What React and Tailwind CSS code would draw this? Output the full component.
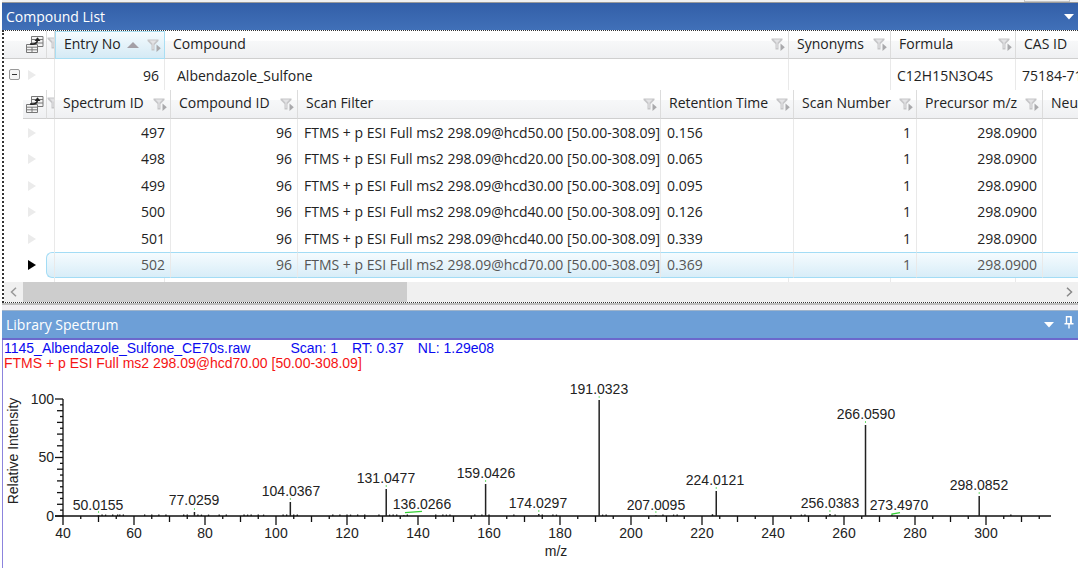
import { useState } from 'react';

const spectra = [
  { id: 497, compound: 96, filter: 'FTMS + p ESI Full ms2 298.09@hcd50.00 [50.00-308.09]', rt: '0.156', scan: 1, mz: '298.0900' },
  { id: 498, compound: 96, filter: 'FTMS + p ESI Full ms2 298.09@hcd20.00 [50.00-308.09]', rt: '0.065', scan: 1, mz: '298.0900' },
  { id: 499, compound: 96, filter: 'FTMS + p ESI Full ms2 298.09@hcd30.00 [50.00-308.09]', rt: '0.095', scan: 1, mz: '298.0900' },
  { id: 500, compound: 96, filter: 'FTMS + p ESI Full ms2 298.09@hcd40.00 [50.00-308.09]', rt: '0.126', scan: 1, mz: '298.0900' },
  { id: 501, compound: 96, filter: 'FTMS + p ESI Full ms2 298.09@hcd40.00 [50.00-308.09]', rt: '0.339', scan: 1, mz: '298.0900' },
  { id: 502, compound: 96, filter: 'FTMS + p ESI Full ms2 298.09@hcd70.00 [50.00-308.09]', rt: '0.369', scan: 1, mz: '298.0900' },
];

// h = line height in px, lx / ly = label centre and baseline
const peaks = [
  { mz: 50.0155, h: 1, lx: 95, ly: 138 },
  { mz: 77.0259, h: 4, lx: 191, ly: 133 },
  { mz: 104.0367, h: 14, lx: 288, ly: 124 },
  { mz: 131.0477, h: 27, lx: 383, ly: 111 },
  { mz: 136.0266, h: 1, lx: 419, ly: 137, link: 'M402 140.6L419 139.4' },
  { mz: 159.0426, h: 32, lx: 483, ly: 106 },
  { mz: 174.0297, h: 2, lx: 535, ly: 136 },
  { mz: 191.0323, h: 116, lx: 596, ly: 22 },
  { mz: 207.0095, h: 1, lx: 653, ly: 138 },
  { mz: 224.0121, h: 25, lx: 712, ly: 113 },
  { mz: 256.0383, h: 2, lx: 827, ly: 136 },
  { mz: 266.059, h: 91, lx: 863, ly: 47 },
  { mz: 273.497, h: 1, lx: 896, ly: 138, link: 'M889 143V142L897 140.6' },
  { mz: 298.0852, h: 20, lx: 976, ly: 118 },
];

const noise = [51, 52, 54, 55.4, 56, 57, 63, 65, 67, 69, 74, 75, 78, 79, 81, 84, 86, 91, 92, 93, 95, 96.5, 102, 103, 105, 106, 116, 118, 120, 121, 123, 125, 129, 132, 133, 134, 137, 145, 147, 148, 149, 156, 158, 160, 167, 175, 178, 179, 192, 193, 209, 212, 213, 222.9, 223, 248, 249, 257.5, 307];

const X0 = 60;
const Y0 = 144;
const px = (mz) => X0 + (mz - 40) * 3.55;

function FilterIcon() {
  return (
    <button aria-label="Filter" className="shrink-0">
      <svg width="14" height="13" viewBox="0 0 14 13" className="block">
        <path d="M0.5 0.5H11.5V2L7.5 6V11.5H4.5V6L0.5 2Z" fill="#c6c6c8" />
        <path d="M2.5 1.5H9.5L6.5 4.8V10H5.5V4.8Z" fill="#e3e3e5" />
        <path d="M9.5 5.5L13.8 9.2L9.5 13Z" fill="#a9a9ac" />
      </svg>
    </button>
  );
}

function FieldChooserIcon() {
  return (
    <button aria-label="Field chooser" className="block">
      <svg width="18" height="17" viewBox="0 0 18 17" className="block">
        <path d="M5.5 0.5H17V10.5H5.5Z" fill="#f4f4f4" stroke="#777" />
        <path d="M5.5 3.5H17M5.5 7H17" stroke="#777" />
        <path d="M0.5 8.5H11.5V16.5H0.5Z" fill="#f4f4f4" stroke="#777" />
        <path d="M0.5 11.2H11.5M0.5 13.8H11.5M6 11V16.5" stroke="#777" />
        <path d="M4 8C8 8.5 11.4 7.5 11.5 4" fill="none" stroke="#222" strokeWidth="1.6" />
        <path d="M8.5 5L11.5 1.2L14.5 5Z" fill="#222" />
      </svg>
    </button>
  );
}

function HeadCell({ label, sorted, last }) {
  return (
    <th
      scope="col"
      className={`overflow-hidden border-b p-0 text-left font-normal ${
        sorted
          ? 'border border-[#a9def3] bg-linear-to-b from-[#f4fbfe] to-[#d5eaf5]'
          : 'border-[#cfcfcf] bg-linear-to-b from-white from-35% via-[#f7f8f9] via-36% to-[#eff0f2]'
      } ${!sorted && !last ? 'border-r border-r-[#dcdcdc]' : ''}`}
    >
      <div className="flex items-center justify-between pr-[3px] pl-2 whitespace-nowrap">
        <span className="mb-[2px] leading-6">{label}</span>
        {sorted && (
          <svg width="12" height="6" viewBox="0 0 12 6" className="mr-2 ml-auto">
            <path d="M0 6L6 0L12 6Z" fill="#a39fa6" />
          </svg>
        )}
        {!last && <FilterIcon />}
      </div>
    </th>
  );
}

function SliverHead() {
  return (
    <th className="overflow-hidden border-x border-b border-[#cfcfcf] border-x-[#dcdcdc] bg-linear-to-b from-white from-35% via-[#f7f8f9] via-36% to-[#eff0f2] p-0">
      <FilterIcon />
    </th>
  );
}

function RowArrow({ active }) {
  return (
    <svg width="8" height="10" viewBox="0 0 8 10" className="ml-[5px] block">
      <path d="M0 0L8 5L0 10Z" fill={active ? '#000' : '#ebebeb'} />
    </svg>
  );
}

function SpectraTable() {
  const [selected, setSelected] = useState(502);
  const head = 'border-b border-[#cfcfcf] bg-linear-to-b from-white from-35% via-[#f7f8f9] via-36% to-[#eff0f2]';
  return (
    <table className="w-full table-fixed border-separate border-spacing-0">
      <colgroup>
        <col className="w-[23px]" />
        <col className="w-[9px]" />
        <col className="w-[116px]" />
        <col className="w-[127px]" />
        <col />
        <col className="w-[133px]" />
        <col className="w-[123px]" />
        <col className="w-[126px]" />
        <col className="w-[35px]" />
      </colgroup>
      <thead>
        <tr className="h-[29px]">
          <th className={`p-0 pl-[3px] ${head}`}><FieldChooserIcon /></th>
          <SliverHead />
          <HeadCell label="Spectrum ID" />
          <HeadCell label="Compound ID" />
          <HeadCell label="Scan Filter" />
          <HeadCell label="Retention Time" />
          <HeadCell label="Scan Number" />
          <HeadCell label="Precursor m/z" />
          <HeadCell label="Neu" last />
        </tr>
      </thead>
      <tbody>
        {spectra.map((s) => {
          const on = s.id === selected;
          const cell = `overflow-hidden whitespace-nowrap border-r border-r-[#e9e9e9] py-0 leading-5 ${
            on ? 'border-y border-y-[#a3dcf5] bg-linear-to-b from-[#f5fbfe] to-[#d8edf8] text-[#555]' : ''
          }`;
          return (
            <tr key={s.id} onClick={() => setSelected(s.id)} className="h-[26px] odd:h-[27px]">
              <td className="p-0"><RowArrow active={on} /></td>
              <td className={`p-0 border-r border-r-[#e9e9e9] ${on ? 'rounded-l-md border-y border-l border-[#a3dcf5] bg-linear-to-b from-[#f5fbfe] to-[#d8edf8]' : ''}`}></td>
              <td className={`pr-[5px] pl-0 text-right ${cell}`}>{s.id}</td>
              <td className={`pr-[5px] pl-0 text-right ${cell}`}>{s.compound}</td>
              <td className={`pr-0 pl-[6px] ${cell}`}>{s.filter}</td>
              <td className={`pr-0 pl-[6px] ${cell}`}>{s.rt}</td>
              <td className={`pr-[5px] pl-0 text-right ${cell}`}>{s.scan}</td>
              <td className={`pr-[5px] pl-0 text-right ${cell}`}>{s.mz}</td>
              <td className={on ? 'border-y border-y-[#a3dcf5] bg-linear-to-b from-[#f5fbfe] to-[#d8edf8] p-0' : 'p-0'}></td>
            </tr>
          );
        })}
      </tbody>
    </table>
  );
}

function CompoundTable() {
  const [open, setOpen] = useState(true);
  const line = 'border-r border-[#e9e9e9] p-0';
  return (
    <table className="w-full table-fixed border-separate border-spacing-0">
      <colgroup>
        <col className="w-[42px]" />
        <col className="w-[9px]" />
        <col className="w-[110px]" />
        <col />
        <col className="w-[102px]" />
        <col className="w-[125px]" />
        <col className="w-[62px]" />
      </colgroup>
      <thead>
        <tr className="h-[28px]">
          <th className="border-b border-[#cfcfcf] bg-linear-to-b from-white from-35% via-[#f7f8f9] via-36% to-[#eff0f2] p-0 pl-[22px]">
            <FieldChooserIcon />
          </th>
          <SliverHead />
          <HeadCell label="Entry No" sorted />
          <HeadCell label="Compound" />
          <HeadCell label="Synonyms" />
          <HeadCell label="Formula" />
          <HeadCell label="CAS ID" last />
        </tr>
      </thead>
      <tbody>
        <tr className="h-[31px]">
          <td className="p-0">
            <div className="flex items-center pl-[5px]">
              <button
                aria-label={open ? 'Collapse' : 'Expand'}
                onClick={() => setOpen(!open)}
                className="flex h-[11px] w-[11px] items-center justify-center rounded-xs border border-[#999] bg-[#f5f5f5]"
              >
                <span className="h-px w-[5px] bg-[#333]"></span>
              </button>
              <div className="ml-[3px]"><RowArrow /></div>
            </div>
          </td>
          <td className={line}></td>
          <td className={`${line} pt-[2px] pr-[5px] text-right`}>96</td>
          <td className={`${line} pt-[2px] pl-3`}>Albendazole_Sulfone</td>
          <td className={line}></td>
          <td className={`${line} pt-[2px] pl-[6px]`}>C12H15N3O4S</td>
          <td className="overflow-hidden p-0 pt-[2px] pl-[6px] whitespace-nowrap">75184-71</td>
        </tr>
        {open && (
          <tr>
            <td colSpan={7} className="p-0 pl-[19px]"><SpectraTable /></td>
          </tr>
        )}
        <tr className="h-1">
          <td className="p-0"></td>
          <td className={line}></td>
          <td className={line}></td>
          <td className={line}></td>
          <td className={line}></td>
          <td className={line}></td>
          <td className="p-0"></td>
        </tr>
      </tbody>
    </table>
  );
}

function ScrollBar() {
  return (
    <div className="flex h-5 items-stretch bg-[#f0f0f0]">
      <button aria-label="Scroll left" className="flex w-[19px] items-center justify-center">
        <svg width="7" height="10" viewBox="0 0 7 10"><path d="M6 0.8L1.5 5L6 9.2" fill="none" stroke="#999" strokeWidth="1.5" /></svg>
      </button>
      <div className="flex-1"><div className="h-full w-[37%] bg-[#cdcdcd]"></div></div>
      <button aria-label="Scroll right" className="flex w-[18px] items-center justify-center">
        <svg width="7" height="10" viewBox="0 0 7 10"><path d="M1 0.8L5.5 5L1 9.2" fill="none" stroke="#888" strokeWidth="1.5" /></svg>
      </button>
    </div>
  );
}

function Caret() {
  return (
    <button aria-label="Window menu">
      <svg width="10" height="6" viewBox="0 0 10 6" className="block"><path d="M0 0H10L5 5.5Z" fill="#fff" /></svg>
    </button>
  );
}

function Spectrum() {
  const yTicks = Array.from({ length: 21 }, (_, i) => i * 5);
  const xTicks = Array.from({ length: 55 }, (_, i) => 45 + i * 5).filter((v) => v <= 315);
  return (
    <svg viewBox="0 0 1075 196" className="block w-full font-['Liberation_Sans',Arial,sans-serif] text-[14px]" fill="#222">
      <g stroke="#111" strokeWidth="1.3">
        <path d={`M${X0} 27V${Y0 + 9}M52 ${Y0}H1048`} fill="none" />
        {yTicks.map((v) => {
          const y = Y0 - v * 1.17;
          const len = v % 50 === 0 ? 8 : v % 10 === 0 ? 6 : 3;
          return <line key={v} x1={X0 - len} x2={X0} y1={y} y2={y} />;
        })}
        {xTicks.map((v) => (
          <line key={v} x1={px(v)} x2={px(v)} y1={Y0} y2={Y0 + (v % 20 === 0 ? 9 : v % 10 === 0 ? 6 : 3)} />
        ))}
        {noise.map((v) => (
          <line key={v} x1={px(v)} x2={px(v)} y1={Y0} y2={Y0 - 1.4} />
        ))}
      </g>
      <g textAnchor="end">
        <text x="51" y="32">100</text>
        <text x="51" y="90">50</text>
        <text x="51" y="149">0</text>
      </g>
      <g textAnchor="middle">
        {[40, 60, 80, 100, 120, 140, 160, 180, 200, 220, 240, 260, 280, 300].map((v) => (
          <text key={v} x={px(v)} y="166">{v}</text>
        ))}
        <text x="553" y="184">m/z</text>
        <text transform="translate(15 79) rotate(-90)">Relative Intensity</text>
        {peaks.map((p) => (
          <g key={p.mz}>
            <line x1={px(p.mz)} x2={px(p.mz)} y1={Y0} y2={Y0 - p.h} stroke="#222" strokeWidth="1.5" />
            {p.link ? (
              <path d={p.link} fill="none" stroke="#35cf35" strokeWidth="1.4" />
            ) : (
              <line x1={px(p.mz)} x2={px(p.mz)} y1={Y0 - p.h - 2} y2={Y0 - p.h - 4} stroke="#6fdc6f" />
            )}
            <text x={p.lx} y={p.ly}>{p.mz.toFixed(4)}</text>
          </g>
        ))}
      </g>
    </svg>
  );
}

export default function App() {
  return (
    <div className="bg-white px-[2px] font-['Open_Sans','Noto_Sans',sans-serif] text-[14px] text-[#222]">
      <div className="flex h-[3px] justify-end border-b border-[#9a9a9a] bg-[#f1f1f1] pr-2">
        <div className="w-[46px] border-x border-b border-[#c4c4c4]"></div>
      </div>

      <section className="border-b-2 border-[#bdbdbd]">
        <header className="flex h-[27px] items-center justify-between bg-linear-to-b from-[#335fa8] to-[#4070b8] pr-1 pl-1">
          <h2 className="text-white">Compound List</h2>
          <Caret />
        </header>
        <div className="overflow-hidden border-y border-l-2 border-dotted border-[#333]">
          <CompoundTable />
          <ScrollBar />
        </div>
      </section>

      <div className="h-[5px] bg-[#f1eff2]"></div>

      <section>
        <header className="flex h-[30px] items-center justify-between border-t border-b-2 border-t-[#9fb4cb] border-b-[#6b68cc] bg-[#6d9fd7] pr-1 pl-1">
          <h2 className="text-white">Library Spectrum</h2>
          <div className="flex items-center gap-[10px]">
            <Caret />
            <button aria-label="Auto hide" className="mb-1">
              <svg width="10" height="13" viewBox="0 0 10 13" className="block">
                <path d="M2.5 7.5V0.8H7V7.5M0.5 7.8H9.5M5 8V12.5" fill="none" stroke="#fff" strokeWidth="1.4" />
                <path d="M6 0.8H7.8V7.5H6Z" fill="#fff" />
              </svg>
            </button>
          </div>
        </header>
        <div className="border-l border-[#8c84dd]">
          <div className="pt-px pl-px font-['Liberation_Sans',Arial,sans-serif] leading-[15px] whitespace-nowrap">
            <p className="flex text-[#0a0af0]">
              <span>1145_Albendazole_Sulfone_CE70s.raw</span>
              <span className="ml-10">Scan: 1</span>
              <span className="ml-[14px]">RT: 0.37</span>
              <span className="ml-[14px]">NL: 1.29e08</span>
            </p>
            <p className="pb-px text-[#f51414]">FTMS + p ESI Full ms2 298.09@hcd70.00 [50.00-308.09]</p>
          </div>
          <Spectrum />
        </div>
      </section>
    </div>
  );
}
